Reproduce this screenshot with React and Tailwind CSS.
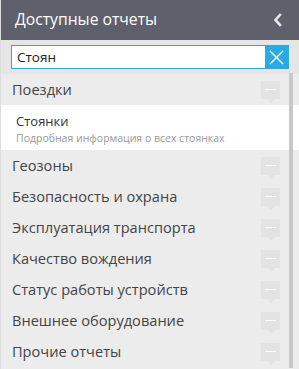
import React from 'react';

const GROUPS = [
  'Геозоны',
  'Безопасность и охрана',
  'Эксплуатация транспорта',
  'Качество вождения',
  'Статус работы устройств',
  'Внешнее оборудование',
  'Прочие отчеты',
];

function Collapse() {
  return (
    <div className="relative w-[19px] h-[18px] bg-[#e3e3e3] flex items-center justify-center">
      <div className="w-[11px] h-px bg-white" />
      <div className="absolute left-1/2 -translate-x-1/2 top-full w-0 h-0 border-l-[4px] border-r-[4px] border-t-[4px] border-l-transparent border-r-transparent border-t-[#e3e3e3]" />
    </div>
  );
}

function GroupRow({ title }) {
  return (
    <div className="h-[31px] flex items-center justify-between pl-[11px] pr-[19px] bg-[#ececec]">
      <span className="text-[14.6px] text-[#444]">{title}</span>
      <Collapse />
    </div>
  );
}

export default function App() {
  return (
    <div
      className="relative w-[299px] h-[369px] overflow-hidden bg-[#ececec] border-l border-[#dcdcdc]"
      style={{ fontFamily: '"Open Sans", "Noto Sans", sans-serif' }}
    >
      {/* Header */}
      <div className="h-10 bg-[#5e606b] flex items-center justify-between pl-[14px] pr-[17px]">
        <span className="text-[15.7px] text-white">Доступные отчеты</span>
        <svg width="9" height="14" viewBox="0 0 9 14" fill="none" stroke="#e8e8ea" strokeWidth="2.6" strokeLinecap="square">
          <polyline points="7 2 2.5 7 7 12" />
        </svg>
      </div>

      {/* Search */}
      <div className="bg-[#e5e5e5] pt-[5px] pb-[5px] pl-[10px] pr-[10px]">
        <div className="flex h-[24px] border border-[#29abe2] bg-white">
          <input
            className="flex-1 min-w-0 px-[5px] text-[13.5px] text-[#222] outline-none bg-white"
            defaultValue="Стоян"
          />
          <button className="w-[23px] bg-[#29abe2] flex items-center justify-center">
            <svg width="15" height="15" viewBox="0 0 15 15" stroke="white" strokeWidth="1.4">
              <line x1="1" y1="1" x2="14" y2="14" />
              <line x1="14" y1="1" x2="1" y2="14" />
            </svg>
          </button>
        </div>
      </div>

      {/* List */}
      <GroupRow title="Поездки" />
      <div className="bg-white h-[45px] pl-[15px] pt-[8px]">
        <div className="text-[13px] leading-[16px] text-[#333]">Стоянки</div>
        <div className="mt-[2px] text-[10.5px] leading-[14px] text-[#999]">Подробная информация о всех стоянках</div>
      </div>
      {GROUPS.map((g) => (
        <GroupRow key={g} title={g} />
      ))}

      {/* Scroll thumb */}
      <div className="absolute left-[288px] top-[73px] w-[4px] h-[295px] bg-[#c8c8c8]" />
    </div>
  );
}
